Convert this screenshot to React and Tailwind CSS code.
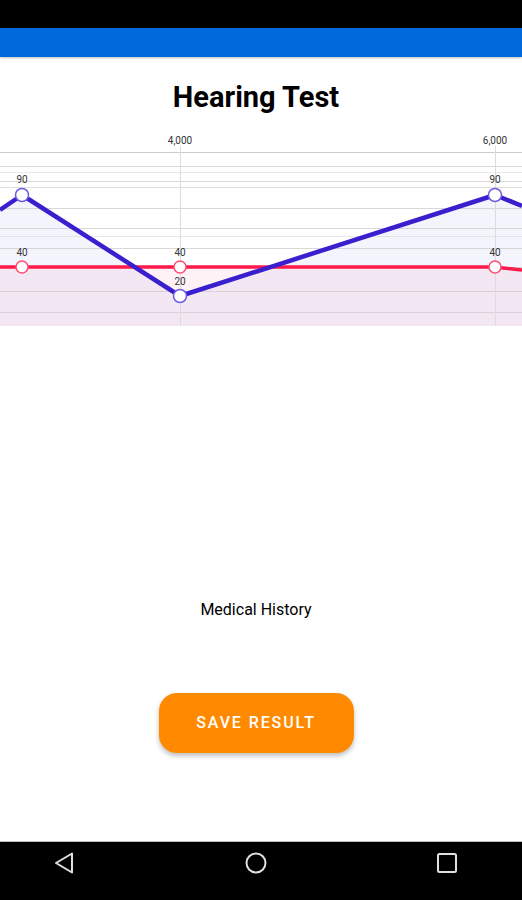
import React from "react";

const GRID = [
  { y: 22, o: 0.9 },
  { y: 36, o: 0.7 },
  { y: 42, o: 0.4 },
  { y: 51, o: 0.7 },
  { y: 57, o: 0.6 },
  { y: 78, o: 0.7 },
  { y: 98, o: 0.7 },
  { y: 106, o: 0.4 },
  { y: 118, o: 0.7 },
  { y: 137, o: 0.7 },
  { y: 161, o: 0.7 },
  { y: 182, o: 0.6 },
];

const blue = [
  [0, 80],
  [22, 65],
  [180, 166],
  [495, 65],
  [522, 76],
];
const red = [
  [0, 137],
  [22, 137],
  [180, 137],
  [495, 137],
  [522, 140],
];

const toPts = (arr) => arr.map((p) => p.join(",")).join(" ");

function Chart() {
  const bottom = 196;
  return (
    <svg width="522" height="200" viewBox="0 0 522 200" className="block">
      {/* area fills */}
      <polygon
        points={`${toPts(blue)} 522,${bottom} 0,${bottom}`}
        fill="rgba(70,60,200,0.06)"
      />
      <polygon
        points={`${toPts(red)} 522,${bottom} 0,${bottom}`}
        fill="rgba(233,30,99,0.06)"
      />

      {/* grid */}
      {GRID.map((g) => (
        <line
          key={g.y}
          x1="0"
          x2="522"
          y1={g.y + 0.5}
          y2={g.y + 0.5}
          stroke="#c8c8c8"
          strokeOpacity={g.o}
          strokeWidth="1"
        />
      ))}
      <line x1="180.5" x2="180.5" y1="16" y2="196" stroke="#dcdcdc" />
      <line x1="495.5" x2="495.5" y1="16" y2="196" stroke="#dcdcdc" />

      {/* x labels */}
      <text x="180" y="14" fontSize="10" fill="#333" textAnchor="middle" fontFamily="Roboto, sans-serif">
        4,000
      </text>
      <text x="495" y="14" fontSize="10" fill="#333" textAnchor="middle" fontFamily="Roboto, sans-serif">
        6,000
      </text>

      {/* lines */}
      <polyline points={toPts(red)} fill="none" stroke="#ff1a4b" strokeWidth="3.5" strokeLinejoin="round" />
      <polyline points={toPts(blue)} fill="none" stroke="#3a1fcf" strokeWidth="4.5" strokeLinejoin="round" />

      {/* points */}
      {[22, 180, 495].map((x) => (
        <circle key={"r" + x} cx={x} cy="137" r="6" fill="#fff" stroke="#ff4d74" strokeWidth="1.5" />
      ))}
      {[
        [22, 65],
        [180, 166],
        [495, 65],
      ].map(([x, y]) => (
        <circle key={"b" + x} cx={x} cy={y} r="6.5" fill="#fff" stroke="#6b5fe0" strokeWidth="1.5" />
      ))}

      {/* value labels */}
      <g fontSize="10" fill="#333" textAnchor="middle" fontFamily="Roboto, sans-serif">
        <text x="22" y="53">90</text>
        <text x="495" y="53">90</text>
        <text x="22" y="126">40</text>
        <text x="180" y="126">40</text>
        <text x="495" y="126">40</text>
        <text x="180" y="155">20</text>
      </g>
    </svg>
  );
}

export default function App() {
  return (
    <div
      className="flex h-[900px] w-[522px] flex-col overflow-hidden bg-white"
      style={{ fontFamily: "Roboto, 'Noto Sans', sans-serif" }}
    >
      {/* status bar */}
      <div className="h-[28px] bg-black" />
      {/* app bar */}
      <div className="h-[29px] bg-[#0069dc] shadow-[0_1px_2px_rgba(0,0,0,0.25)]" />

      <div className="flex flex-1 flex-col">
        <div className="flex flex-col items-center pr-[10px]">
          <h1 className="mt-[22px] h-[36px] text-[29px] font-bold leading-[36px] text-black">
            Hearing Test
          </h1>
        </div>
        <div className="mt-[15px] w-full">
          <Chart />
        </div>

        <div className="flex flex-col items-center pr-[10px]">
          <div className="mt-[270px] h-[20px] text-[16px] font-normal leading-[20px] text-black">
            Medical History
          </div>

          <button className="mt-[73px] flex h-[60px] w-[195px] items-center justify-center rounded-[18px] bg-[#ff8a00] text-[16px] font-medium tracking-[1.9px] text-white shadow-[0_3px_5px_rgba(0,0,0,0.25)]">
            SAVE RESULT
          </button>
        </div>
      </div>

      {/* nav bar */}
      <div className="h-[59px] border-t border-[#bdbdbd] bg-black pt-[9px]">
        <div className="flex items-center justify-between pl-[53px] pr-[63px]">
          <svg width="24" height="24" viewBox="0 0 24 24">
            <path d="M19 2.5 L19 21.5 L3 12 Z" fill="none" stroke="#e0e0e0" strokeWidth="2" strokeLinejoin="round" />
          </svg>
          <svg width="24" height="24" viewBox="0 0 24 24">
            <circle cx="12" cy="12" r="9.5" fill="none" stroke="#e0e0e0" strokeWidth="2" />
          </svg>
          <svg width="24" height="24" viewBox="0 0 24 24">
            <rect x="3" y="3" width="18" height="18" rx="1.5" fill="none" stroke="#e0e0e0" strokeWidth="2" />
          </svg>
        </div>
      </div>
    </div>
  );
}
